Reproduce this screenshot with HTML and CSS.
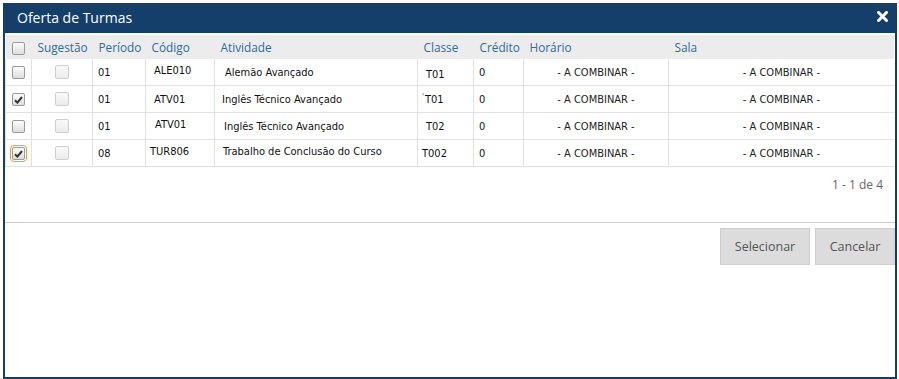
FILE: index.html
```html
<!DOCTYPE html>
<html lang="pt">
  <head>
    <meta charset="UTF-8" />
    <meta name="viewport" content="width=device-width, initial-scale=1.0" />
    <title>Oferta de Turmas</title>
    <link rel="stylesheet" href="styles.css">
  </head>
  <body>
    <div class="modal">
      <div class="modal-title">
        <span>Oferta de Turmas</span>
        <svg class="close" width="11" height="11" viewBox="0 0 11 11">
          <path d="M1.5 1.5 L9.5 9.5 M9.5 1.5 L1.5 9.5" stroke="#fff" stroke-width="3" stroke-linecap="square" />
        </svg>
      </div>
      <div class="modal-body">
        <table class="grid">
          <colgroup>
            <col style="width:26px"><col style="width:61px"><col style="width:53px"><col style="width:69px">
            <col style="width:203px"><col style="width:56px"><col style="width:50px"><col style="width:145px"><col>
          </colgroup>
          <thead>
            <tr>
              <th class="c"><span class="cb"></span></th>
              <th>Sugestão</th>
              <th>Período</th>
              <th>Código</th>
              <th>Atividade</th>
              <th>Classe</th>
              <th>Crédito</th>
              <th>Horário</th>
              <th>Sala</th>
            </tr>
          </thead>
          <tbody>
            <tr>
              <td class="c"><span class="cb"></span></td>
              <td class="c"><span class="cb off"></span></td>
              <td>01</td>
              <td class="code up">ALE010</td>
              <td class="act a3">Alemão Avançado</td>
              <td class="cls down">T01</td>
              <td>0</td>
              <td class="mid">- A COMBINAR -</td>
              <td class="mid">- A COMBINAR -</td>
            </tr>
            <tr>
              <td class="c"><span class="cb on"><svg width="9" height="8" viewBox="0 0 9 8"><path d="M1 4.2 L3.4 6.6 L8 1" fill="none" stroke="#333" stroke-width="2" /></svg></span></td>
              <td class="c"><span class="cb off"></span></td>
              <td>01</td>
              <td class="code">ATV01</td>
              <td class="act">Inglês Técnico Avançado</td>
              <td class="cls"><span class="tick">'</span>T01</td>
              <td>0</td>
              <td class="mid">- A COMBINAR -</td>
              <td class="mid">- A COMBINAR -</td>
            </tr>
            <tr>
              <td class="c"><span class="cb"></span></td>
              <td class="c"><span class="cb off"></span></td>
              <td>01</td>
              <td class="code c1 up">ATV01</td>
              <td class="act a2">Inglês Técnico Avançado</td>
              <td class="cls">T02</td>
              <td>0</td>
              <td class="mid">- A COMBINAR -</td>
              <td class="mid">- A COMBINAR -</td>
            </tr>
            <tr>
              <td class="c"><span class="cb on focus"><svg width="9" height="8" viewBox="0 0 9 8"><path d="M1 4.2 L3.4 6.6 L8 1" fill="none" stroke="#333" stroke-width="2" /></svg></span></td>
              <td class="c"><span class="cb off"></span></td>
              <td>08</td>
              <td class="code c0 up">TUR806</td>
              <td class="act a1 up">Trabalho de Conclusão do Curso</td>
              <td class="cls c0">T002</td>
              <td>0</td>
              <td class="mid">- A COMBINAR -</td>
              <td class="mid">- A COMBINAR -</td>
            </tr>
          </tbody>
        </table>
        <div class="pager">1 - 1 de 4</div>
        <div class="actions">
          <button class="btn btn-select">Selecionar</button>
          <button class="btn btn-cancel">Cancelar</button>
        </div>
      </div>
    </div>
  </body>
</html>
```

FILE: styles.css
```css
body {
  margin: 0;
  background-color: #fff;
  font-family: "Open Sans", Arial, sans-serif;
}
.modal {
  box-sizing: border-box;
  width: 894px;
  height: 376px;
  margin: 3px 0 0 3px;
  border: 2px solid #143f6b;
  background-color: #fff;
}
.modal-title {
  display: flex;
  align-items: center;
  justify-content: space-between;
  height: 28px;
  padding: 0 7px 0 12px;
  background-color: #143f6b;
  color: #fff;
  font-size: 14px;
}
.modal-title span {
  margin-top: -3px;
}
.close {
  margin-top: -6px;
}
.modal-body {
  padding-top: 2px;
}
.grid {
  width: 889px;
  border-collapse: collapse;
  table-layout: fixed;
}
.grid th {
  height: 24px;
  padding: 0 0 0 6px;
  background-color: #ececec;
  color: #2f6b9f;
  font-weight: normal;
  font-size: 11.8px;
  text-align: left;
}
.grid td {
  height: 26px;
  padding: 0 0 0 5px;
  border: 1px solid #e2e2e2;
  border-top: none;
  font-family: "DejaVu Sans Condensed", "DejaVu Sans", sans-serif;
  font-size: 11px;
  color: #111;
  white-space: nowrap;
}
.grid td:last-child {
  border-right: none;
}
.grid .c {
  padding: 0;
  text-align: center;
}
.grid td.mid {
  padding: 0;
  text-align: center;
  color: #222;
}
.grid td.code { padding-left: 8px; }
.grid td.code.c1 { padding-left: 9px; }
.grid td.code.c0 { padding-left: 4px; }
.grid td.act { padding-left: 7px; }
.grid td.act.a3 { padding-left: 10px; }
.grid td.act.a2 { padding-left: 9px; }
.grid td.act.a1 { padding-left: 8px; }
.grid td.cls { padding-left: 8px; }
.grid td.cls.c0 { padding-left: 4px; }
.up { position: relative; top: -2px; }
.down { position: relative; top: 2px; }
.tick {
  font-size: 8px;
  vertical-align: top;
  margin-left: -4px;
  margin-right: 1px;
  color: #555;
}
.cb {
  display: inline-block;
  box-sizing: border-box;
  width: 13px;
  height: 13px;
  border: 1px solid #9a9a9a;
  border-radius: 2px;
  background: linear-gradient(#fcfcfc, #dedede);
  vertical-align: middle;
  position: relative;
}
.cb svg {
  position: absolute;
  left: 1px;
  top: 2px;
}
.cb.off {
  width: 14px;
  height: 14px;
  border-color: #cfcfcf;
  background: linear-gradient(#f9f9f9, #ececec);
}
.cb.focus {
  outline: 1px solid #f0a020;
  outline-offset: 1px;
}
.pager {
  height: 55px;
  padding-right: 12px;
  text-align: right;
  line-height: 36px;
  font-size: 12px;
  color: #666;
}
.actions {
  display: flex;
  justify-content: flex-end;
  gap: 5px;
  padding-top: 5px;
  border-top: 1px solid #cccccc;
}
.btn {
  height: 37px;
  border: 1px solid #cfcfcf;
  background-color: #dcdcdc;
  color: #555;
  font-family: "Open Sans", Arial, sans-serif;
  font-size: 12.5px;
  cursor: pointer;
}
.btn-select {
  width: 90px;
}
.btn-cancel {
  width: 80px;
}
```
